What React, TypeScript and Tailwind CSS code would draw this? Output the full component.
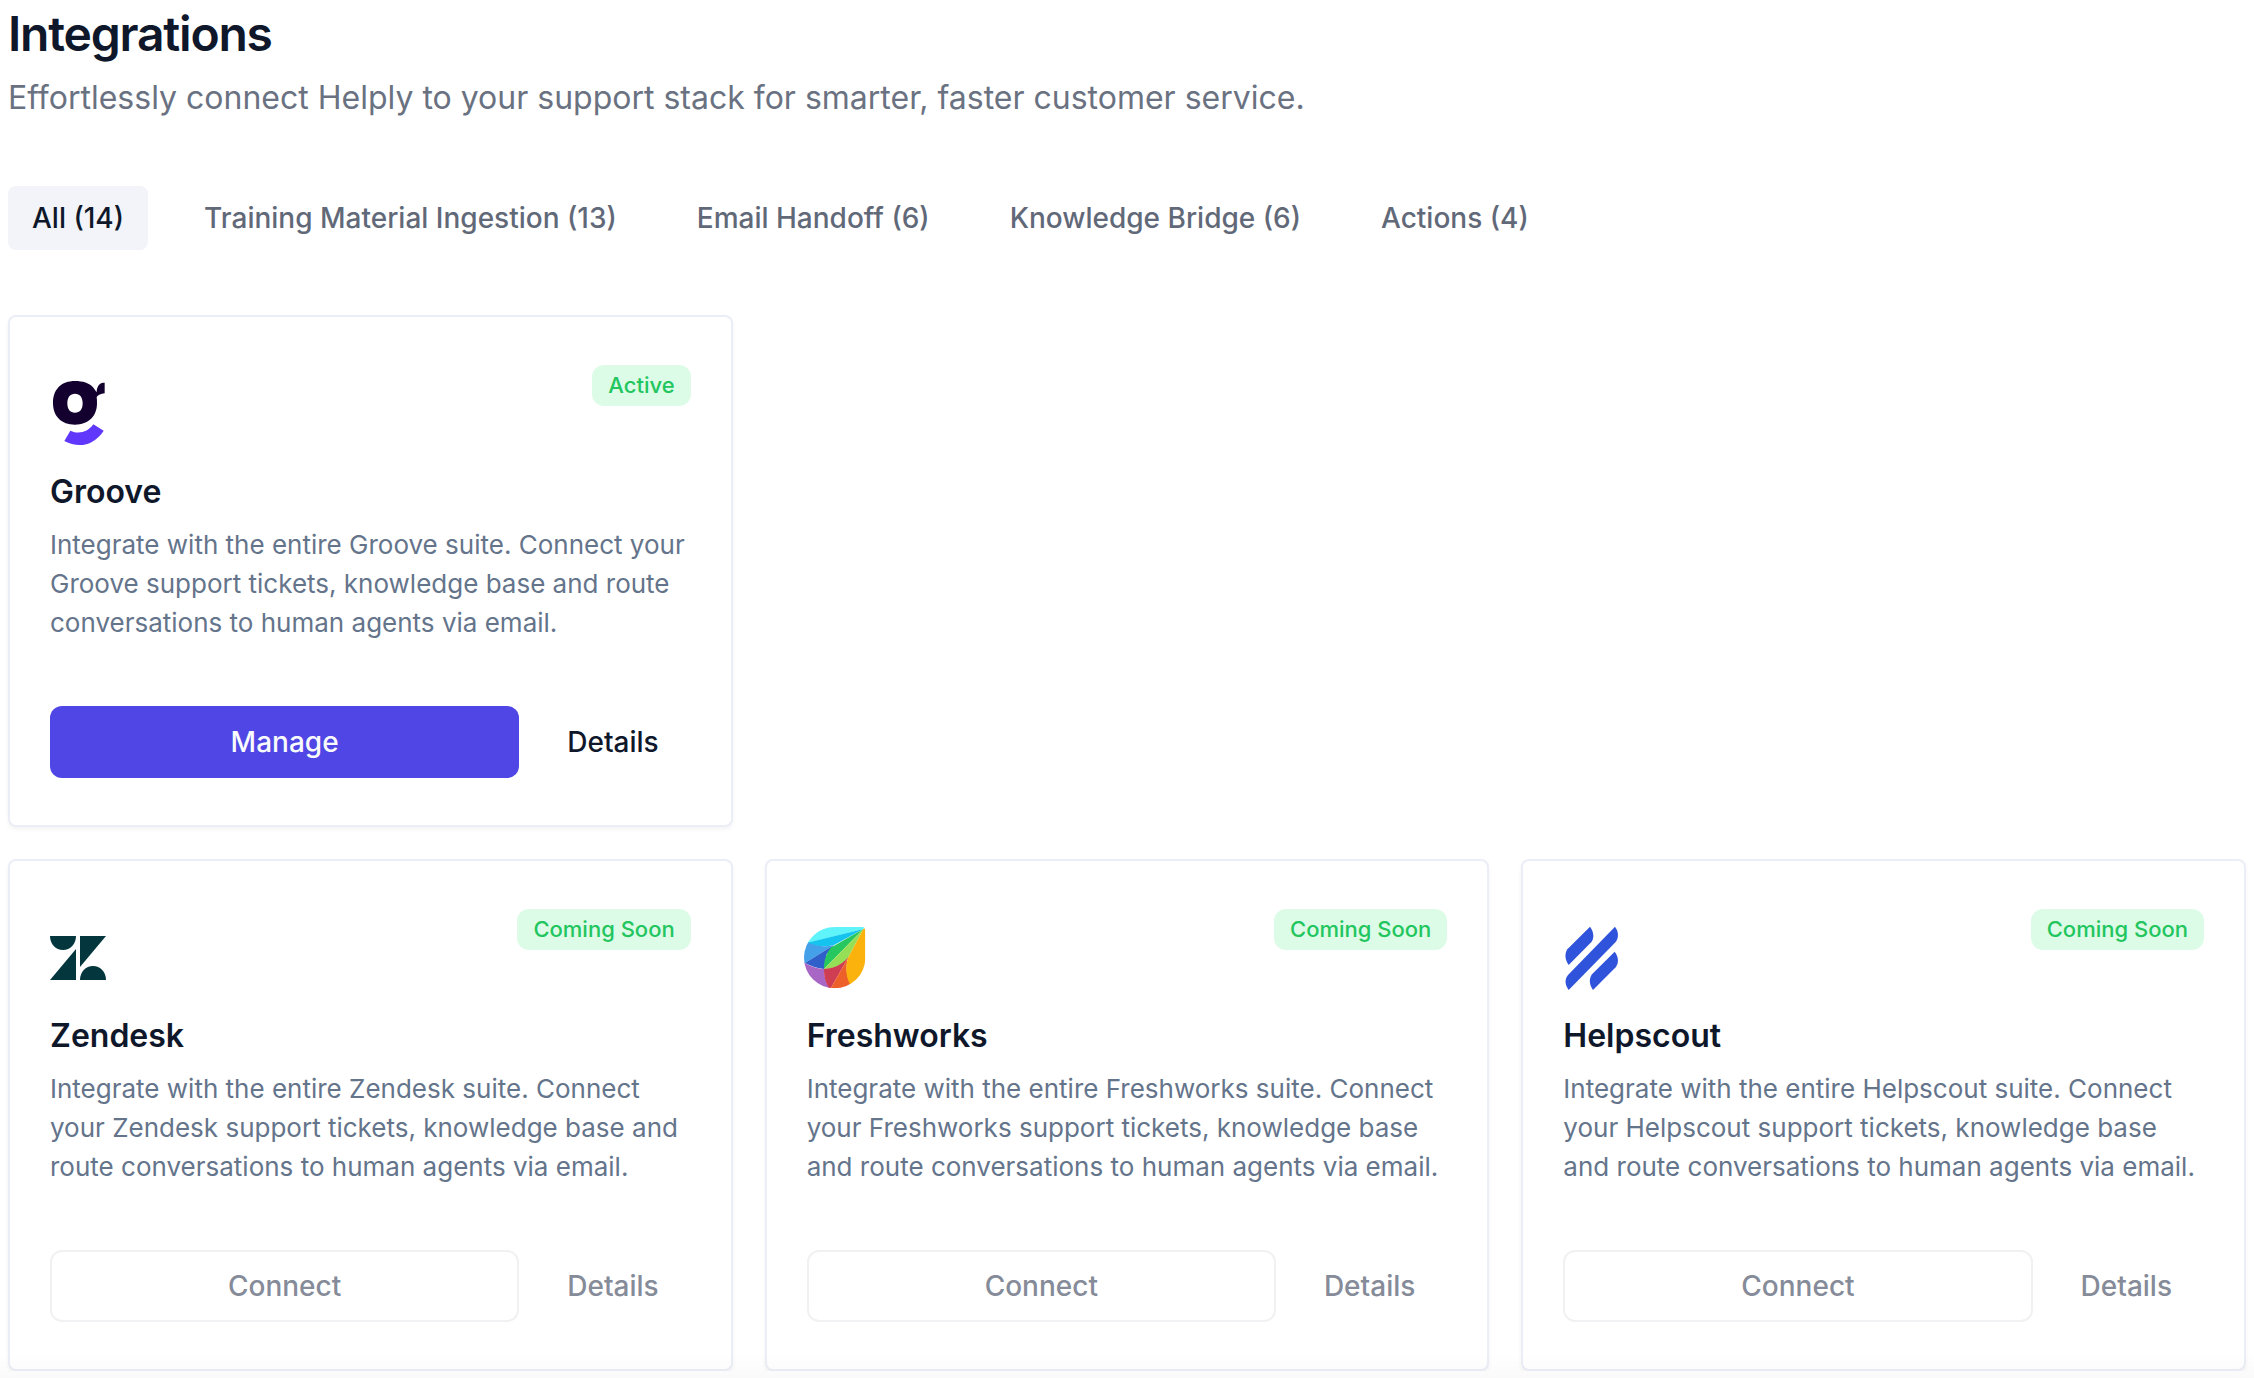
import { useState } from "react";
import type { ReactNode } from "react";
import clsx from "clsx";

interface Integration {
  name: string;
  description: string;
  status: "Active" | "Coming Soon";
  logo: ReactNode;
}

const logoClass = "mt-[17px] h-16 w-16 overflow-visible";

function GrooveLogo() {
  return (
    <svg viewBox="60 63 192 192" className={logoClass} aria-hidden="true">
      <path
        fill="#14002f"
        fillRule="evenodd"
        d="M135 60C158 60 178 66 189 79C194 85 197 90 200 94C200 80 206 66 220 65H224V97C212 98 205 102 200 108C201 114 201 120 201 127C201 166 176 191 135 191C94 191 69 166 69 126C69 85 94 60 135 60ZM135 98C120 98 112 109 112 127C112 145 120 155 135 155C150 155 158 145 158 127C158 109 150 98 135 98Z"
      />
      <path
        fill="#5f38fb"
        d="M121 209C146 221 173 214 190 190L221 209C192 254 146 263 103 240Z"
      />
    </svg>
  );
}

function ZendeskLogo() {
  return (
    <svg viewBox="60 45 192 192" className={logoClass} fill="#03363d" aria-hidden="true">
      <path d="M60 75H138C138 99 121 117 99 117C77 117 60 99 60 75Z" />
      <path d="M138 114V207H60Z" />
      <path d="M150 75H228L150 168Z" />
      <path d="M150 207C150 183 167 165 189 165C211 165 228 183 228 207Z" />
    </svg>
  );
}

function FreshworksLogo() {
  return (
    <svg viewBox="67 45 192 192" className={logoClass} aria-hidden="true">
      <clipPath id="freshworks-drop">
        <path d="M150 48H232Q242 48 242 58V140A92 92 0 1 1 150 48Z" />
      </clipPath>
      <g clipPath="url(#freshworks-drop)">
        <path fill="#5ff3fa" d="M50 40H250L236 54L60 98H50Z" />
        <path fill="#14c4ef" d="M236 54L68 95C92 108 122 108 147 103Z" />
        <path fill="#45a0ea" d="M50 90L70 94C94 107 122 108 147 103L60 157H50Z" />
        <path fill="#2f5fc8" d="M147 103L61 156C80 166 98 172 118 174L126 130Z" />
        <path fill="#27c75f" d="M236 54L138 110C124 130 117 150 118 174Z" />
        <path fill="#95df57" d="M236 54L118 174C150 174 176 160 191 139Z" />
        <path fill="#a967c5" d="M50 150L61 156C80 168 98 173 118 174C117 196 124 216 137 236H50Z" />
        <path fill="#cf3d52" d="M118 174C148 173 172 161 191 139L136 236C122 216 117 196 118 174Z" />
        <path fill="#ee6029" d="M191 139L136 236H200V222C184 196 182 166 191 139Z" />
        <path fill="#fbb20c" d="M236 54L191 139C182 166 182 196 198 224L250 210V50Z" />
      </g>
    </svg>
  );
}

function HelpscoutLogo() {
  return (
    <svg viewBox="57 45 192 192" className={logoClass} fill="#3053dc" aria-hidden="true">
      <path d="M138 47C148 60 152 78 143 92L74 162C63 147 61 129 70 115Z" />
      <path d="M213 47C224 62 225 79 215 93L74 237C63 222 61 206 72 192Z" />
      <path d="M212 122C224 137 225 155 215 169L147 237C136 222 134 204 144 190Z" />
    </svg>
  );
}

const tabs = [
  "All (14)",
  "Training Material Ingestion (13)",
  "Email Handoff (6)",
  "Knowledge Bridge (6)",
  "Actions (4)",
];

const connected: Integration[] = [
  {
    name: "Groove",
    description:
      "Integrate with the entire Groove suite. Connect your Groove support tickets, knowledge base and route conversations to human agents via email.",
    status: "Active",
    logo: <GrooveLogo />,
  },
];

const upcoming: Integration[] = [
  {
    name: "Zendesk",
    description:
      "Integrate with the entire Zendesk suite. Connect your Zendesk support tickets, knowledge base and route conversations to human agents via email.",
    status: "Coming Soon",
    logo: <ZendeskLogo />,
  },
  {
    name: "Freshworks",
    description:
      "Integrate with the entire Freshworks suite. Connect your Freshworks support tickets, knowledge base and route conversations to human agents via email.",
    status: "Coming Soon",
    logo: <FreshworksLogo />,
  },
  {
    name: "Helpscout",
    description:
      "Integrate with the entire Helpscout suite. Connect your Helpscout support tickets, knowledge base and route conversations to human agents via email.",
    status: "Coming Soon",
    logo: <HelpscoutLogo />,
  },
];

function IntegrationCard({ item }: { item: Integration }) {
  const active = item.status === "Active";

  return (
    <article className="flex flex-col rounded-lg border-2 border-[#ebeef6] bg-white px-10 pt-12 pb-[47px] shadow-[0_2px_4px_rgba(0,0,0,0.05)]">
      <div className="mb-6 flex items-start justify-between">
        {item.logo}
        <span className="rounded-xl bg-[#dcfce7] px-4 text-[22px] leading-[41px] font-medium text-[#22c55e]">
          {item.status}
        </span>
      </div>
      <h2 className="text-[32px] leading-[44px] font-semibold text-slate-900">
        {item.name}
      </h2>
      <p className="mt-[11px] text-[26px] leading-[39px] text-[#64748b]">
        {item.description}
      </p>
      <div className="mt-16 flex gap-4 text-[28px] font-medium">
        <button
          disabled={!active}
          className={clsx(
            "h-[72px] flex-1 rounded-xl",
            active
              ? "bg-[#4f46e5] text-slate-50"
              : "border-2 border-[#f1f1f3] text-[#858b98]"
          )}
        >
          {active ? "Manage" : "Connect"}
        </button>
        <button
          disabled={!active}
          className={clsx(
            "h-[72px] rounded-xl px-8",
            active ? "text-slate-900" : "text-[#858b98]"
          )}
        >
          Details
        </button>
      </div>
    </article>
  );
}

export default function App() {
  const [tab, setTab] = useState(tabs[0]);

  return (
    <main className="bg-white px-2 pt-2 font-[Inter,sans-serif]">
      <h1 className="text-[48px] leading-[52px] font-semibold tracking-tight text-slate-900">
        Integrations
      </h1>
      <p className="mt-[14px] text-[32px] leading-[48px] text-gray-500">
        Effortlessly connect Helply to your support stack for smarter, faster
        customer service.
      </p>

      {/* Category filter */}
      <nav className="mt-16 flex flex-wrap gap-8 text-[28px] font-medium">
        {tabs.map((name) => (
          <button
            key={name}
            onClick={() => setTab(name)}
            className={clsx(
              "h-16 rounded-lg px-6",
              tab === name
                ? "bg-[#f3f4f9] text-slate-900"
                : "text-[#616979]"
            )}
          >
            {name}
          </button>
        ))}
      </nav>

      <section className="mt-[65px] grid grid-cols-3 gap-8">
        {connected.map((item) => (
          <IntegrationCard key={item.name} item={item} />
        ))}
      </section>
      <section className="mt-8 grid grid-cols-3 gap-8">
        {upcoming.map((item) => (
          <IntegrationCard key={item.name} item={item} />
        ))}
      </section>

      {/* Soft fade at the bottom edge */}
      <div className="pointer-events-none fixed inset-x-0 bottom-0 h-6 bg-linear-to-b from-transparent to-black/2" />
    </main>
  );
}
